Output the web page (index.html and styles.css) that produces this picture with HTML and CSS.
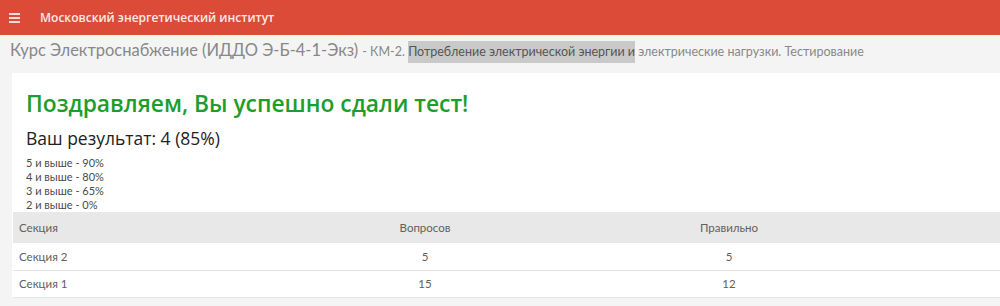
FILE: index.html
```html
<!DOCTYPE html>
<html lang="ru">
<head>
<meta charset="utf-8">
<link rel="stylesheet" href="styles.css">
</head>
<body>
<header class="topbar">
  <span class="burger"><i></i><i></i><i></i></span>
  <span class="brand">Московский энергетический институт</span>
</header>
<div class="crumbs">
  <span class="course">Курс Электроснабжение (ИДДО Э-Б-4-1-Экз)</span>
  <span class="sub"> - КМ-2. <mark class="hl">Потребление электрической энергии и</mark> электрические нагрузки. Тестирование</span>
</div>
<main class="card">
  <h1 class="title">Поздравляем, Вы успешно сдали тест!</h1>
  <div class="result">Ваш результат: 4 (85%)</div>
  <ul class="scale">
    <li>5 и выше - 90%</li>
    <li>4 и выше - 80%</li>
    <li>3 и выше - 65%</li>
    <li>2 и выше - 0%</li>
  </ul>
  <table class="tbl">
    <thead>
      <tr><th class="c1">Секция</th><th class="c2">Вопросов</th><th class="c3">Правильно</th><th class="c4"></th></tr>
    </thead>
    <tbody>
      <tr><td class="c1">Секция 2</td><td class="c2">5</td><td class="c3">5</td><td class="c4"></td></tr>
      <tr><td class="c1">Секция 1</td><td class="c2">15</td><td class="c3">12</td><td class="c4"></td></tr>
    </tbody>
  </table>
</main>
</body>
</html>
```
FILE: styles.css
```css
* { box-sizing: border-box; }
html, body { margin: 0; padding: 0; }
body {
  background: #f4f4f4;
  font-family: Lato, "Liberation Sans", sans-serif;
  width: 1000px;
  height: 306px;
  overflow: hidden;
}
.topbar {
  height: 35px;
  background: #dc4a38;
  display: flex;
  align-items: center;
  padding-left: 9px;
  color: #fff;
}
.burger {
  display: flex;
  flex-direction: column;
  gap: 2px;
  width: 11px;
  margin-right: 20px;
}
.burger i { display: block; height: 2px; background: #f6dcd8; }
.brand {
  font-family: "Open Sans", sans-serif;
  font-weight: 600;
  font-size: 12px;
  color: #fbe9e6;
}
.crumbs {
  height: 38px;
  padding: 5px 0 0 10px;
  color: #888;
  white-space: nowrap;
}
.course { font-size: 16.5px; }
.sub { font-size: 12.5px; }
.hl {
  background: #c9c9c9;
  color: #555;
  padding: 3px 0 4px;
}
.card {
  background: #fff;
  margin-left: 12px;
  padding: 14px 0 0 0;
}
.title {
  margin: 0 0 0 14px;
  font-family: "Open Sans", sans-serif;
  font-weight: 600;
  font-size: 22.8px;
  line-height: 34px;
  color: #1d9d2c;
}
.result {
  margin: 5px 0 0 14px;
  font-family: "Open Sans", sans-serif;
  font-size: 17.5px;
  line-height: 24px;
  color: #222;
}
.scale {
  list-style: none;
  margin: 6px 0 0 14px;
  padding: 0;
  font-size: 11px;
  line-height: 14px;
  color: #4a4a4a;
}
.tbl {
  width: 988px;
  margin-left: 1px;
  border-collapse: collapse;
  table-layout: fixed;
  font-size: 11.5px;
  color: #606060;
}
.tbl th {
  background: #e8e8e8;
  font-weight: normal;
  height: 31px;
  color: #606060;
}
.tbl td {
  height: 27px;
  border-bottom: 1px solid #e3e3e3;
}
.tbl .c1 { text-align: left; padding-left: 6px; width: 300px; }
.tbl .c2 { text-align: center; width: 224px; }
.tbl .c3 { text-align: center; width: 384px; }
.tbl .c4 { width: 80px; }
```
